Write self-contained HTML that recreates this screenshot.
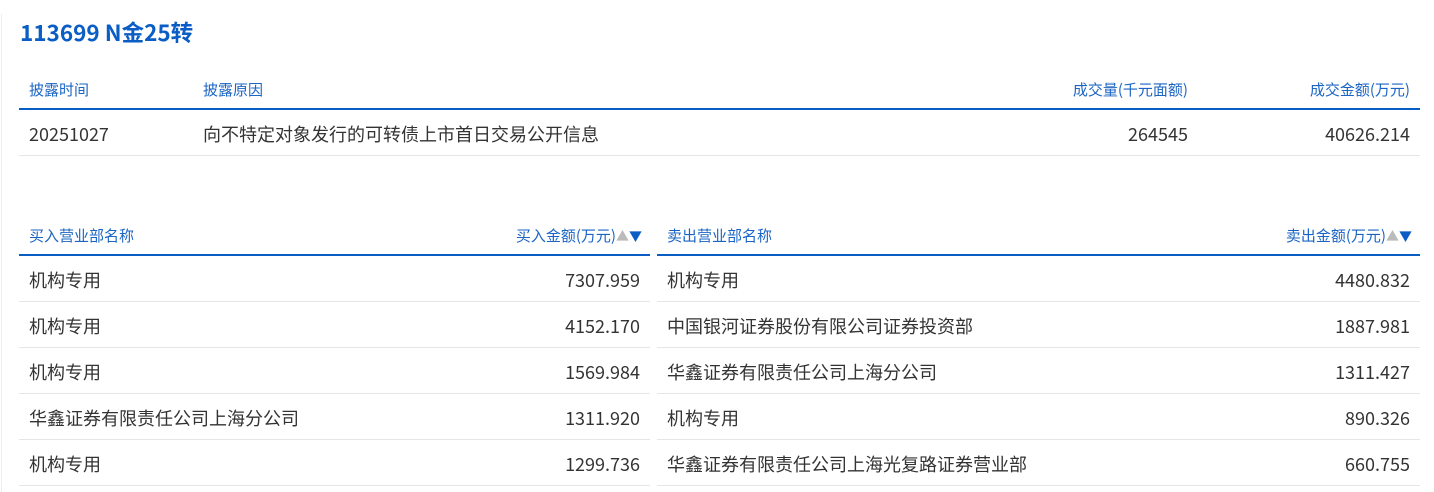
<!DOCTYPE html>
<html><head><meta charset="utf-8"><style>
body{margin:0;background:#fff;font-family:"Noto Sans CJK SC","Liberation Sans",sans-serif;width:1434px;height:492px;overflow:hidden;position:relative}
.edge{position:absolute;left:1px;top:14px;width:1px;height:478px;background:#eee}
h1{position:absolute;left:20px;top:15px;margin:0;font-size:22.5px;line-height:34px;color:#0b5dc6;font-weight:bold}
table{position:absolute;border-collapse:collapse;table-layout:fixed}
th{font-weight:normal;color:#1a64c4;font-size:15px;height:36px;padding:0 10px;border-bottom:2px solid #0b5dc6;text-align:left;vertical-align:middle;line-height:20px;white-space:nowrap}
td{font-size:18px;color:#333;height:45px;padding:3px 10px 0;box-sizing:border-box;border-bottom:1px solid #e6e6e6;vertical-align:middle;line-height:22px;white-space:nowrap}
.r{text-align:right}
.s{font-size:13px;color:#bbb}.s b{color:#0b5dc6;font-weight:normal}
</style></head><body>
<div class="edge"></div>
<h1>113699 N金25转</h1>
<table style="left:19px;top:72px;width:1401px">
<colgroup><col style="width:174px"><col><col style="width:300px"><col style="width:222px"></colgroup>
<tr><th>披露时间</th><th>披露原因</th><th class="r">成交量(千元面额)</th><th class="r">成交金额(万元)</th></tr>
<tr><td style="height:46px">20251027</td><td>向不特定对象发行的可转债上市首日交易公开信息</td><td class="r">264545</td><td class="r">40626.214</td></tr>
</table>
<table style="left:19px;top:218px;width:631px">
<colgroup><col><col style="width:220px"></colgroup>
<tr><th>买入营业部名称</th><th class="r" style="padding-right:8px">买入金额(万元)<span class="s">▲<b>▼</b></span></th></tr>
<tr><td style="height:46px">机构专用</td><td class="r">7307.959</td></tr>
<tr><td style="height:46px">机构专用</td><td class="r">4152.170</td></tr>
<tr><td style="height:46px">机构专用</td><td class="r">1569.984</td></tr>
<tr><td style="height:46px">华鑫证券有限责任公司上海分公司</td><td class="r">1311.920</td></tr>
<tr><td style="height:46px">机构专用</td><td class="r">1299.736</td></tr>
</table>
<table style="left:657px;top:218px;width:763px">
<colgroup><col><col style="width:220px"></colgroup>
<tr><th>卖出营业部名称</th><th class="r" style="padding-right:8px">卖出金额(万元)<span class="s">▲<b>▼</b></span></th></tr>
<tr><td style="height:46px">机构专用</td><td class="r">4480.832</td></tr>
<tr><td style="height:46px">中国银河证券股份有限公司证券投资部</td><td class="r">1887.981</td></tr>
<tr><td style="height:46px">华鑫证券有限责任公司上海分公司</td><td class="r">1311.427</td></tr>
<tr><td style="height:46px">机构专用</td><td class="r">890.326</td></tr>
<tr><td style="height:46px">华鑫证券有限责任公司上海光复路证券营业部</td><td class="r">660.755</td></tr>
</table>
</body></html>
